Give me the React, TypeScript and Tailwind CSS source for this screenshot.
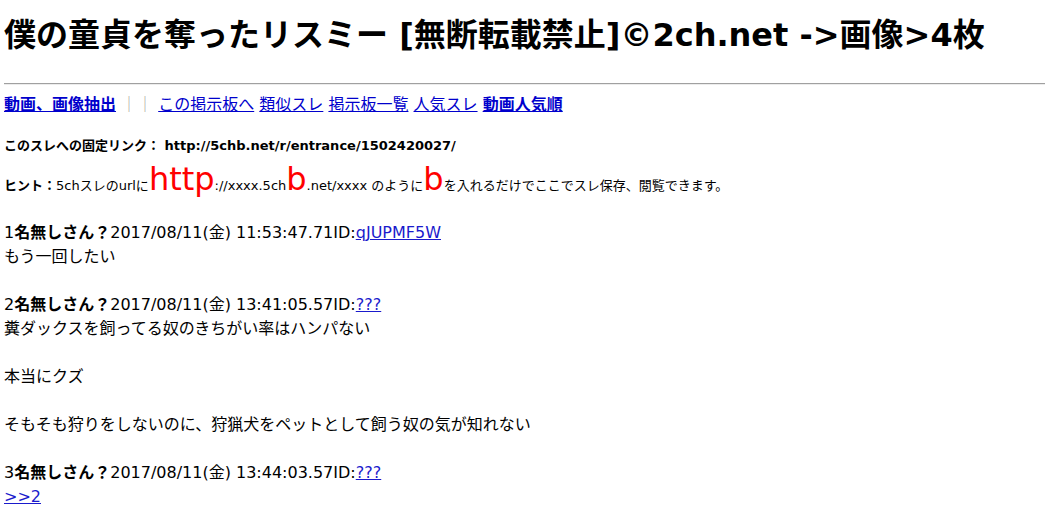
const font = "font-['DejaVu_Sans','Noto_Sans_CJK_JP',sans-serif]";

const posts = [
  {
    no: 1,
    date: "2017/08/11(金) 11:53:47.71",
    id: "qJUPMF5W",
    lines: ["もう一回したい"],
  },
  {
    no: 2,
    date: "2017/08/11(金) 13:41:05.57",
    id: "???",
    lines: ["糞ダックスを飼ってる奴のきちがい率はハンパない", "", "本当にクズ", "", "そもそも狩りをしないのに、狩猟犬をペットとして飼う奴の気が知れない"],
  },
  {
    no: 3,
    date: "2017/08/11(金) 13:44:03.57",
    id: "???",
    lines: [">>2"],
  },
];

export default function App() {
  return (
    <div className={`${font} bg-white text-black min-h-screen px-[4px] overflow-hidden`}>
      <h1 className="pt-[11px] text-[32px] leading-[48px] font-bold whitespace-nowrap">
        僕の童貞を奪ったリスミー [無断転載禁止]©2ch.net -&gt;画像&gt;4枚
      </h1>
      <hr className="mt-[24px] border-0 border-t border-t-[#a0a0a0] border-b border-b-[#ececec]" />
      <div className="mt-[8px] text-[16px] leading-[24px] whitespace-nowrap">
        <a href="#" className="font-bold text-[#0000cc] underline">動画、画像抽出</a>
        <span className="text-[#a8a8a0]"> ｜｜ </span>
        <a href="#" className="text-[#0000cc] underline">この掲示板へ</a>{" "}
        <a href="#" className="text-[#0000cc] underline">類似スレ</a>{" "}
        <a href="#" className="text-[#0000cc] underline">掲示板一覧</a>{" "}
        <a href="#" className="text-[#0000cc] underline">人気スレ</a>{" "}
        <a href="#" className="font-bold text-[#0000cc] underline">動画人気順</a>
      </div>
      <div className="mt-[19px] text-[13px] leading-[20px] font-bold whitespace-nowrap">
        このスレへの固定リンク： http://5chb.net/r/entrance/1502420027/
      </div>
      <div className="mt-[3px] text-[13px] leading-[40px] whitespace-nowrap">
        <span className="font-bold">ヒント：</span>5chスレのurlに
        <span className="text-[32px] text-[#ff0000]">http</span>://xxxx.5ch
        <span className="text-[32px] text-[#ff0000]">b</span>.net/xxxx のように
        <span className="text-[32px] text-[#ff0000]">b</span>を入れるだけでここでスレ保存、閲覧できます。
      </div>
      <div className="mt-[15px] text-[16px] leading-[24px]">
        {posts.map((p) => (
          <div key={p.no} className="mb-[24px]">
            <div className="whitespace-nowrap">
              {p.no}
              <span className="font-bold">名無しさん？</span>
              {p.date}ID:
              <a href="#" className="text-[#1a1acc] underline">{p.id}</a>
            </div>
            {p.lines.map((l, i) =>
              l === ">>2" ? (
                <div key={i}>
                  <a href="#" className="text-[#1a1acc] underline">&gt;&gt;2</a>
                </div>
              ) : (
                <div key={i} className="h-[24px]">{l}</div>
              )
            )}
          </div>
        ))}
      </div>
    </div>
  );
}
